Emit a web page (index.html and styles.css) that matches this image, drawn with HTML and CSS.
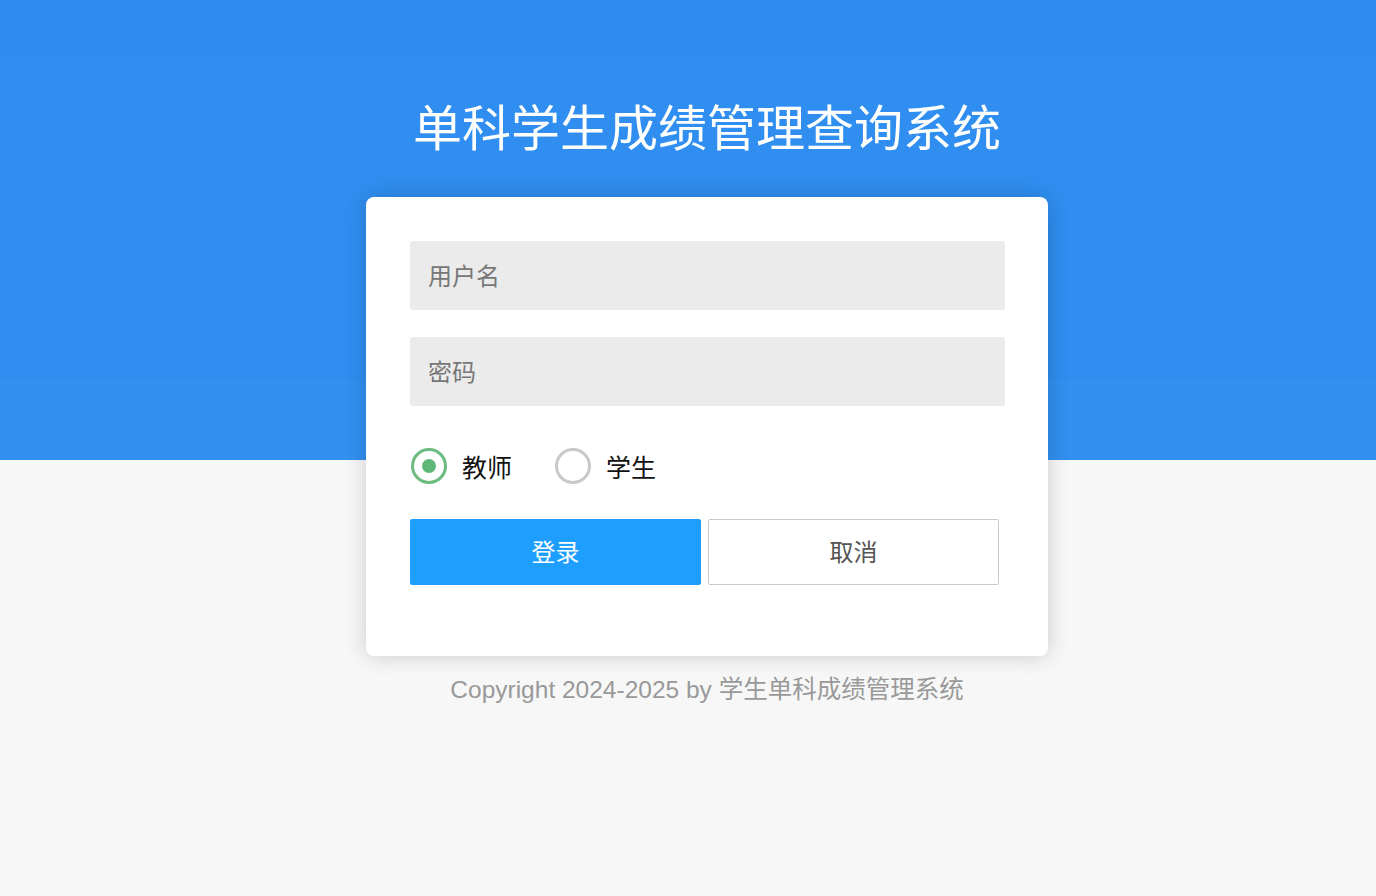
FILE: index.html
```html
<!DOCTYPE html>
<html lang="zh-CN">
  <head>
    <meta charset="UTF-8" />
    <meta name="viewport" content="width=device-width, initial-scale=1.0" />
    <link rel="stylesheet" href="styles.css">
    <title>单科学生成绩管理查询系统</title>
  </head>
  <body>
    <div class="wrap">
      <h1 class="title">单科学生成绩管理查询系统</h1>
      <form class="loginBox" id="loginForm">
        <input class="field" type="text" name="username" placeholder="用户名" />
        <input class="field" type="password" name="password" placeholder="密码" />

        <div class="roles">
          <label class="role">
            <input type="radio" name="role" value="teacher" checked />
            <span>教师</span>
          </label>
          <label class="role">
            <input type="radio" name="role" value="student" />
            <span>学生</span>
          </label>
        </div>

        <div class="btns">
          <button type="button" class="btn blueBtn">登录</button>
          <button type="reset" class="btn plainBtn">取消</button>
        </div>
      </form>
      <p class="footer">Copyright 2024-2025 by 学生单科成绩管理系统</p>
    </div>
  </body>
</html>
```

FILE: styles.css
```css
body {
  margin: 0;
  min-height: 896px;
  font-family: "Liberation Sans", "Noto Sans CJK SC", sans-serif;
  background:
    linear-gradient(#2e8bef 0 58px, #2f8ef0 58px 380px, #3190f0 380px 460px, #f7f7f7 460px);
}

.wrap {
  padding: 92px 0 0 38px;
  display: flex;
  flex-direction: column;
  align-items: center;
}

.title {
  margin: 0;
  font-family: "Noto Sans CJK SC", sans-serif;
  font-size: 49px;
  font-weight: normal;
  line-height: 66px;
  color: #fff;
}

.loginBox {
  margin-top: 39px;
  width: 595px;
  padding: 44px 43px 71px 44px;
  background: #fff;
  border-radius: 8px;
  box-shadow: 0 0 22px rgba(0, 0, 0, 0.18);
}

.field {
  display: block;
  box-sizing: border-box;
  width: 100%;
  height: 69px;
  margin: 0 0 27px 0;
  padding: 0 18px 3px 18px;
  border: none;
  border-radius: 3px;
  background: #ebebeb;
  font-family: "Noto Sans CJK SC", sans-serif;
  font-size: 24px;
  color: #333;
  outline: none;
}

.field::placeholder {
  color: #777;
}

.roles {
  display: flex;
  gap: 42px;
  margin-top: 42px;
  height: 36px;
}

.role {
  display: flex;
  align-items: center;
  gap: 15px;
  font-family: "Noto Sans CJK SC", sans-serif;
  font-size: 25px;
  color: #111;
  cursor: pointer;
}

.role input {
  appearance: none;
  margin: 0 0 0 1px;
  width: 36px;
  height: 36px;
  box-sizing: border-box;
  border: 3px solid #c9c9c9;
  border-radius: 50%;
  display: flex;
  align-items: center;
  justify-content: center;
}

.role input:checked {
  border-color: #6cbb7f;
}

.role input:checked::after {
  content: "";
  width: 14px;
  height: 14px;
  border-radius: 50%;
  background: #5fb878;
}

.btns {
  display: flex;
  gap: 7px;
  margin-top: 35px;
}

.btn {
  width: 291px;
  height: 66px;
  padding-bottom: 4px;
  border-radius: 2px;
  font-family: "Noto Sans CJK SC", sans-serif;
  font-size: 24px;
  cursor: pointer;
}

.blueBtn {
  border: none;
  background: #1e9fff;
  color: #fff;
}

.plainBtn {
  border: 1px solid #c9c9c9;
  background: #fff;
  color: #555;
}

.footer {
  margin: 18px 0 0 0;
  font-size: 24.5px;
  line-height: 32px;
  color: #999;
}
```
